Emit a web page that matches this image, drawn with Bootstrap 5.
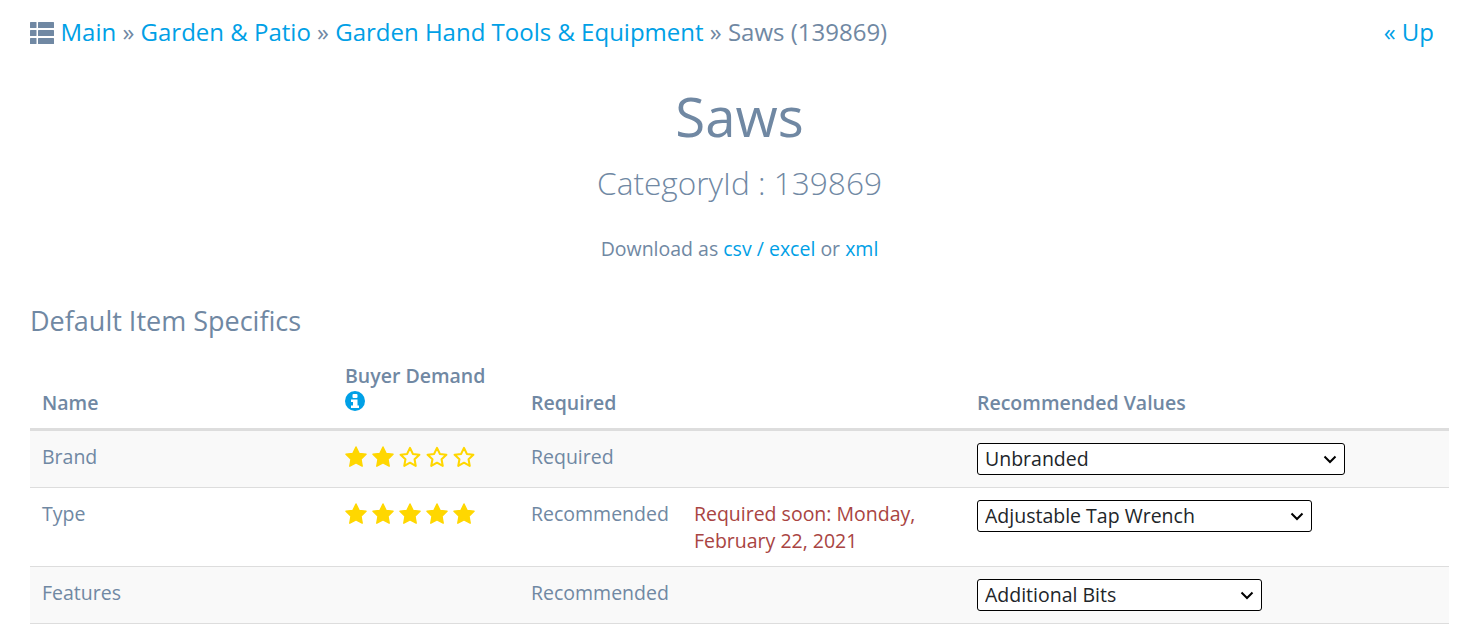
<!DOCTYPE html>
<html lang="en">
<head>
  <meta charset="UTF-8">
  <title>Saws</title>
  <link href="https://cdn.jsdelivr.net/npm/bootstrap@5.3.3/dist/css/bootstrap.min.css" rel="stylesheet">
  <style>
    body {
      font-family: "Open Sans", sans-serif;
      font-size: 18px;
      color: #7088a3;
      overflow: hidden;
    }
    a { color: #00a0e6; text-decoration: none; }
    .page-wrap { padding: 14px 33px 0 30px; }
    .crumbs { font-size: 24px; line-height: 35px; padding-right: 15px; }
    .crumbs-icon { margin-right: 6.500px; vertical-align: -3px; }
    .page-title { font-size: 54.500px; line-height: 62px; margin: 36px 0 0; color: #7088a3; font-weight: 400; }
    .page-sub { font-size: 31.600px; line-height: 40px; margin: 16px 0 0; color: #7088a3; font-weight: 300; }
    .download-line { font-size: 19.500px; line-height: 28px; margin: 32px 0 0; }
    .section-title { font-size: 27px; line-height: 34px; margin: 41px 0 0; color: #7088a3; font-weight: 400; }
    .specs { margin: 12px 0 0; width: 1419px; table-layout: fixed; color: #7088a3; --bs-table-color: #7088a3; font-size: 19.500px; line-height: 27px; }
    .specs th { font-weight: 600; vertical-align: bottom; padding: 12px; border-bottom: 3px solid #ddd; }
    .specs td { padding: 12px; vertical-align: top; border-bottom: 1px solid #ddd; }
    .specs .row-alt td { background: #f9f9f9; }
    .info-icon { display: block; margin-top: 2px; margin-bottom: 5px; }
    .stars { display: flex; gap: 5px; padding-top: 3px; }
    .soon { color: #a94442; margin-left: 25px; }
    .req-cell { display: flex; }
    .val-select {
      font-family: "Open Sans", sans-serif;
      font-size: 19.500px;
      line-height: 26px;
      height: 32px;
      padding: 0 7px;
      color: #212529;
      display: block;
      appearance: none;
      border: 1px solid #000;
      border-radius: 3px;
      background: #fff url("data:image/svg+xml,%3Csvg xmlns='http://www.w3.org/2000/svg' width='14' height='9' viewBox='0 0 14 9'%3E%3Cpath d='M1.500 1.500L7 7l5.500-5.500' fill='none' stroke='%23000' stroke-width='2'/%3E%3C/svg%3E") no-repeat right 7px center;
    }
    .w-brand { width: 368px; }
    .w-type { width: 335px; }
    .w-feat { width: 285px; }
  </style>
</head>
<body>
<div class="page-wrap">
  <div class="crumbs d-flex justify-content-between">
    <div>
      <svg class="crumbs-icon" width="24" height="22" viewBox="0 0 24 22"><g fill="#7088a3"><rect x="0" y="0" width="6.500" height="6" rx=".5"/><rect x="8" y="0" width="16" height="6" rx=".5"/><rect x="0" y="8" width="6.500" height="6" rx=".5"/><rect x="8" y="8" width="16" height="6" rx=".5"/><rect x="0" y="16" width="6.500" height="6" rx=".5"/><rect x="8" y="16" width="16" height="6" rx=".5"/></g></svg><a href="#">Main</a> » <a href="#">Garden &amp; Patio</a> » <a href="#">Garden Hand Tools &amp; Equipment</a> » Saws (139869)
    </div>
    <div><a href="#">« Up</a></div>
  </div>

  <div class="text-center">
    <h1 class="page-title">Saws</h1>
    <h3 class="page-sub">CategoryId : 139869</h3>
    <p class="download-line">Download as <a href="#">csv / excel</a> or <a href="#">xml</a></p>
  </div>

  <h4 class="section-title">Default Item Specifics</h4>

  <table class="table specs">
    <colgroup>
      <col style="width:303px">
      <col style="width:186px">
      <col style="width:446px">
      <col>
    </colgroup>
    <thead>
      <tr>
        <th>Name</th>
        <th>Buyer Demand
          <svg class="info-icon" width="20" height="20" viewBox="0 0 20 20"><circle cx="10" cy="10" r="10" fill="#00a0e6"/><rect x="7.500" y="3" width="5" height="4" rx="1" fill="#fff"/><path d="M6 8.500h6.500v6h1.500v2.500h-8v-2.500h2v-3.500h-2z" fill="#fff"/></svg>
        </th>
        <th>Required</th>
        <th>Recommended Values</th>
      </tr>
    </thead>
    <tbody>
      <tr class="row-alt">
        <td>Brand</td>
        <td>
          <div class="stars">
            <svg width="22" height="21" viewBox="0.500 0.500 23 22"><path d="M12 1.500l3.200 6.700 7.300 1-5.300 5.100 1.300 7.300-6.500-3.500-6.500 3.500 1.300-7.300-5.300-5.100 7.300-1z" fill="#ffd700" stroke="#ffd700" stroke-width="1.500" stroke-linejoin="round"/></svg>
            <svg width="22" height="21" viewBox="0.500 0.500 23 22"><path d="M12 1.500l3.200 6.700 7.300 1-5.300 5.100 1.300 7.300-6.500-3.500-6.500 3.500 1.300-7.300-5.300-5.100 7.300-1z" fill="#ffd700" stroke="#ffd700" stroke-width="1.500" stroke-linejoin="round"/></svg>
            <svg width="22" height="21" viewBox="0.500 0.500 23 22"><path d="M12 2.500l3 6.300 6.800 .9-5 4.800 1.200 6.800-6-3.300-6 3.300 1.200-6.800-5-4.800 6.800-.9z" fill="none" stroke="#ffd700" stroke-width="2.200" stroke-linejoin="round"/></svg>
            <svg width="22" height="21" viewBox="0.500 0.500 23 22"><path d="M12 2.500l3 6.300 6.800 .9-5 4.800 1.200 6.800-6-3.300-6 3.300 1.200-6.800-5-4.800 6.800-.9z" fill="none" stroke="#ffd700" stroke-width="2.200" stroke-linejoin="round"/></svg>
            <svg width="22" height="21" viewBox="0.500 0.500 23 22"><path d="M12 2.500l3 6.300 6.800 .9-5 4.800 1.200 6.800-6-3.300-6 3.300 1.200-6.800-5-4.800 6.800-.9z" fill="none" stroke="#ffd700" stroke-width="2.200" stroke-linejoin="round"/></svg>
          </div>
        </td>
        <td>Required</td>
        <td><select class="val-select w-brand"><option>Unbranded</option></select></td>
      </tr>
      <tr>
        <td>Type</td>
        <td>
          <div class="stars">
            <svg width="22" height="21" viewBox="0.500 0.500 23 22"><path d="M12 1.500l3.200 6.700 7.300 1-5.300 5.100 1.300 7.300-6.500-3.500-6.500 3.500 1.300-7.300-5.300-5.100 7.300-1z" fill="#ffd700" stroke="#ffd700" stroke-width="1.500" stroke-linejoin="round"/></svg>
            <svg width="22" height="21" viewBox="0.500 0.500 23 22"><path d="M12 1.500l3.200 6.700 7.300 1-5.300 5.100 1.300 7.300-6.500-3.500-6.500 3.500 1.300-7.300-5.300-5.100 7.300-1z" fill="#ffd700" stroke="#ffd700" stroke-width="1.500" stroke-linejoin="round"/></svg>
            <svg width="22" height="21" viewBox="0.500 0.500 23 22"><path d="M12 1.500l3.200 6.700 7.300 1-5.300 5.100 1.300 7.300-6.500-3.500-6.500 3.500 1.300-7.300-5.300-5.100 7.300-1z" fill="#ffd700" stroke="#ffd700" stroke-width="1.500" stroke-linejoin="round"/></svg>
            <svg width="22" height="21" viewBox="0.500 0.500 23 22"><path d="M12 1.500l3.200 6.700 7.300 1-5.300 5.100 1.300 7.300-6.500-3.500-6.500 3.500 1.300-7.300-5.300-5.100 7.300-1z" fill="#ffd700" stroke="#ffd700" stroke-width="1.500" stroke-linejoin="round"/></svg>
            <svg width="22" height="21" viewBox="0.500 0.500 23 22"><path d="M12 1.500l3.200 6.700 7.300 1-5.300 5.100 1.300 7.300-6.500-3.500-6.500 3.500 1.300-7.300-5.300-5.100 7.300-1z" fill="#ffd700" stroke="#ffd700" stroke-width="1.500" stroke-linejoin="round"/></svg>
          </div>
        </td>
        <td>
          <div class="req-cell">
            <div>Recommended</div>
            <div class="soon">Required soon: Monday, February 22, 2021</div>
          </div>
        </td>
        <td><select class="val-select w-type"><option>Adjustable Tap Wrench</option></select></td>
      </tr>
      <tr class="row-alt">
        <td>Features</td>
        <td></td>
        <td>Recommended</td>
        <td><select class="val-select w-feat"><option>Additional Bits</option></select></td>
      </tr>
    </tbody>
  </table>
</div>
<script src="https://cdn.jsdelivr.net/npm/bootstrap@5.3.3/dist/js/bootstrap.bundle.min.js"></script>
</body>
</html>
